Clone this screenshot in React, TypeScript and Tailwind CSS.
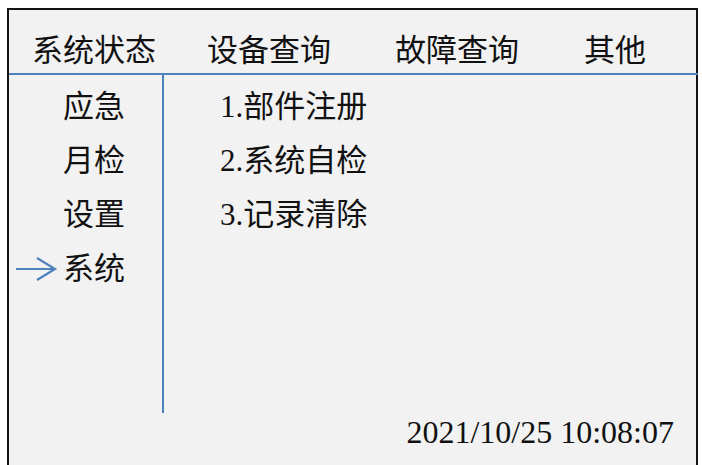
import React from 'react';

const tabs = [
  { label: '系统状态', width: 'w-[175px]' },
  { label: '设备查询', width: 'w-[188px]' },
  { label: '故障查询', width: 'w-[189px]' },
  { label: '其他', width: 'w-[80px]' },
];

const menu = ['应急', '月检', '设置', '系统'];
const items = ['1.部件注册', '2.系统自检', '3.记录清除'];

const Arrow = () => (
  <svg width="44" height="26" viewBox="0 0 44 26" className="shrink-0">
    <path d="M2 13 H41" stroke="#4f81bd" strokeWidth="2.2" fill="none" />
    <path d="M23 2 L41 13 L23 24" stroke="#4f81bd" strokeWidth="2.2" fill="none" />
  </svg>
);

export default function App() {
  return (
    <div
      className="w-[702px] h-[465px] bg-white pt-[8px] pl-[7px]"
      style={{ fontFamily: '"Liberation Serif", "Noto Sans CJK SC", serif' }}
    >
      <div className="w-[691px] h-[457px] border-2 border-[#141414] border-b-0 bg-[#f2f2f2] flex flex-col text-[#111]">
        {/* tab bar */}
        <div className="h-[65px] flex items-center pl-[23px] pt-[18px] text-[31px] leading-none border-b-2 border-[#4f81bd] -mr-[2px]">
          {tabs.map((t) => (
            <span key={t.label} className={t.width}>
              {t.label}
            </span>
          ))}
        </div>

        <div className="flex h-[338px]">
          {/* left menu */}
          <div className="w-[155px] h-full border-r-2 border-[#4f81bd] pt-[5px]">
            {menu.map((m, i) => (
              <div key={m} className="h-[54px] flex items-center text-[31px]">
                <div className="ml-[5px] w-[44px]">{i === 3 && <Arrow />}</div>
                <span className="ml-[5px]">{m}</span>
              </div>
            ))}
          </div>

          {/* sub items */}
          <div className="pt-[5px] pl-[56px]">
            {items.map((it) => (
              <div key={it} className="h-[54px] flex items-center text-[31px]">
                {it}
              </div>
            ))}
          </div>
        </div>

        <div className="flex-1 flex justify-end items-center pr-[22px] text-[32px] leading-none pb-[14px]">
          2021/10/25 10:08:07
        </div>
      </div>
    </div>
  );
}
